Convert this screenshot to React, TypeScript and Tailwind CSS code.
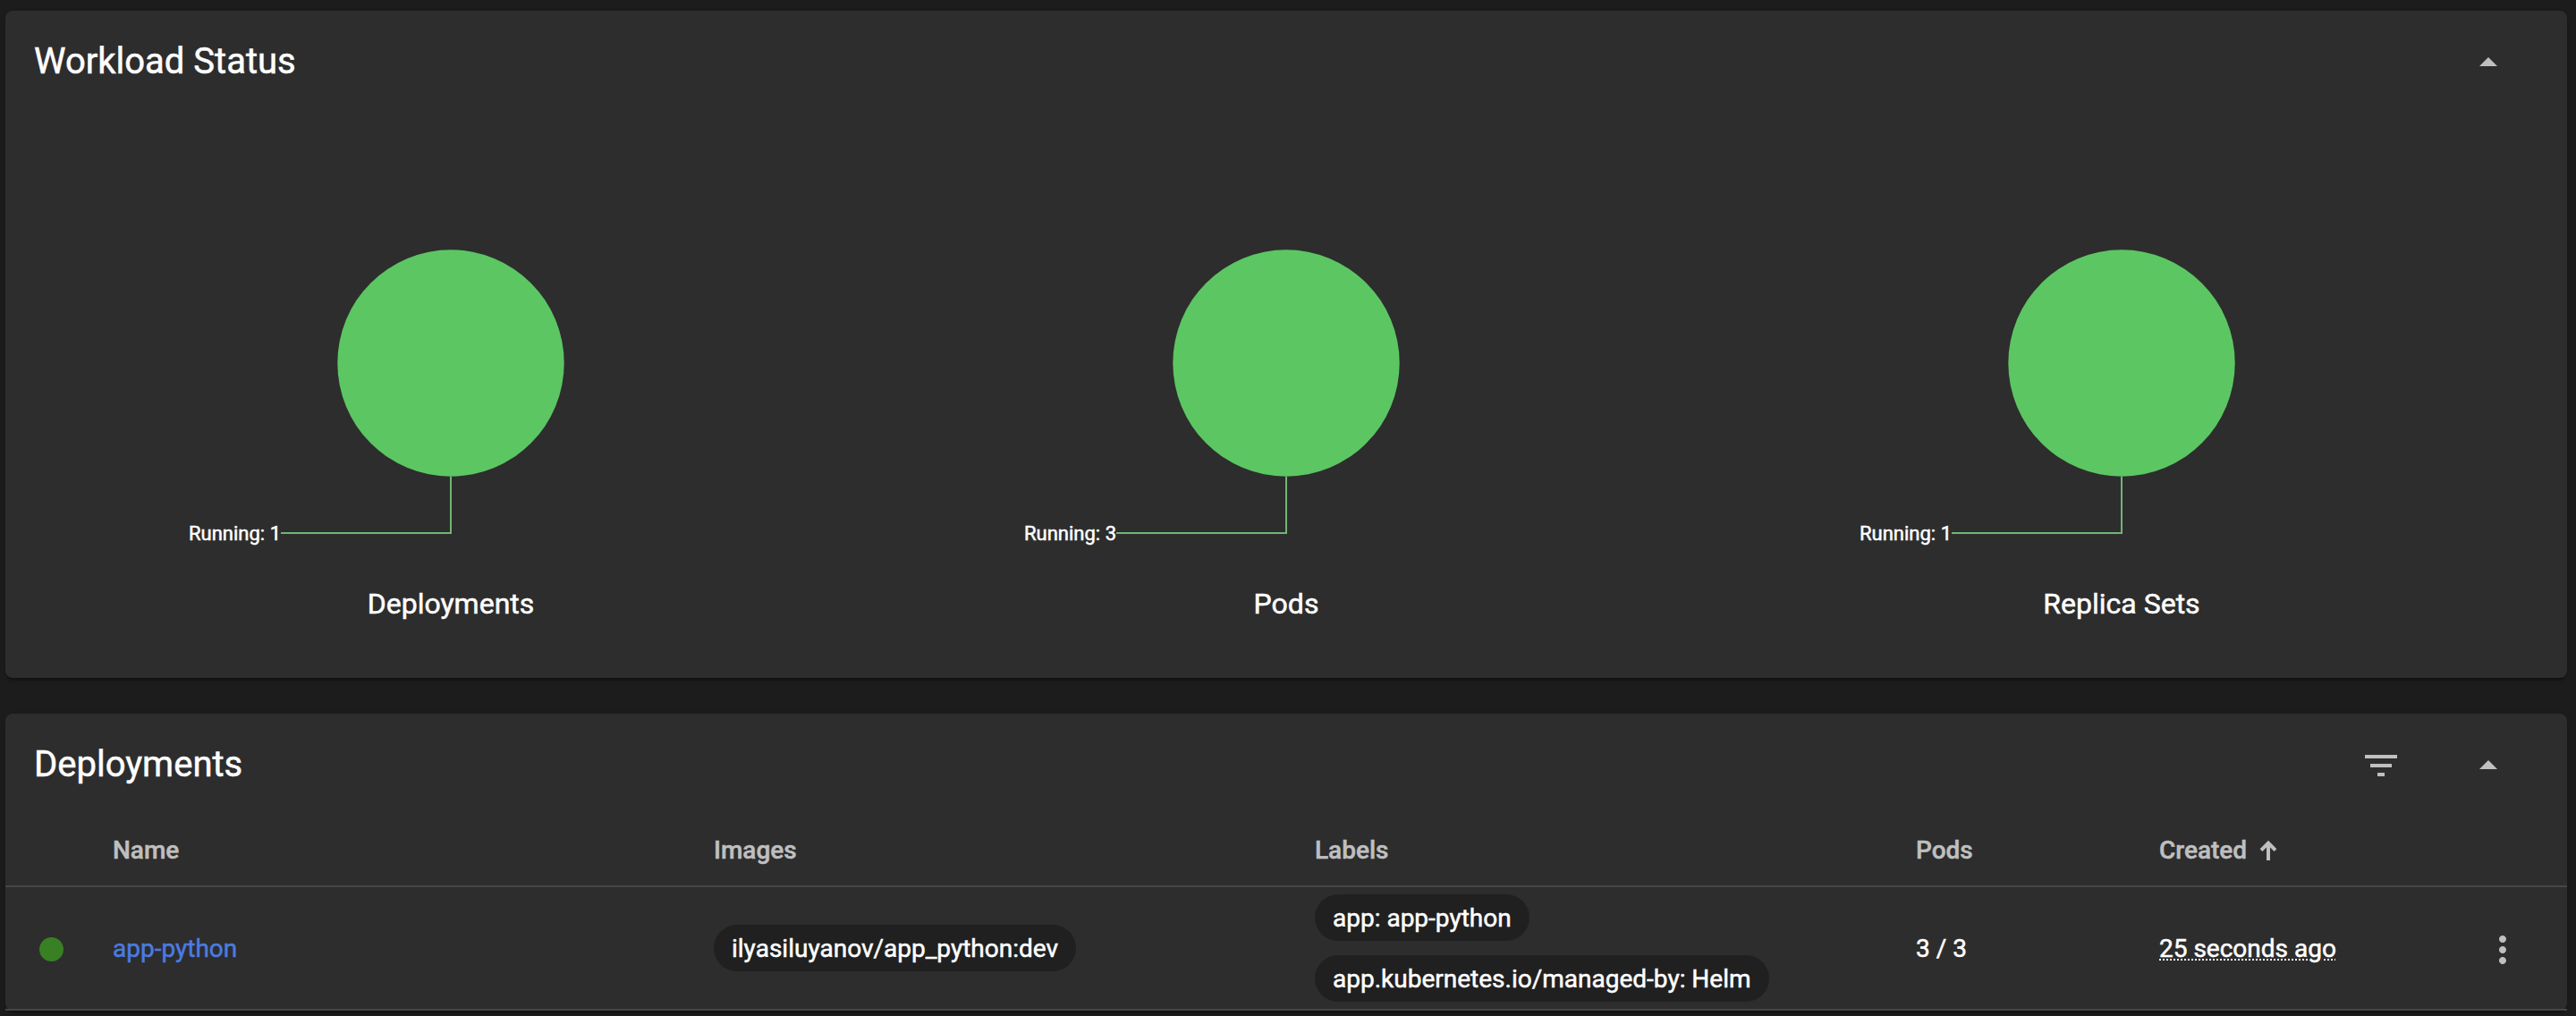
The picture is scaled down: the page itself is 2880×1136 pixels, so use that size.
import React from "react";

const cardClass =
  "rounded-lg bg-[#2d2d2d] shadow-[0_4px_2px_-2px_rgba(0,0,0,0.2),0_2px_2px_rgba(0,0,0,0.14),0_2px_6px_rgba(0,0,0,0.12)]";

const gridClass =
  "grid grid-cols-[120px_672px_672px_672px_272px_336px_120px] border-b-2 border-[#464646]";

function Icon({ d }: { d: string }) {
  return (
    <svg viewBox="0 0 24 24" className="size-12 fill-[#c0c0c0]" aria-hidden="true">
      <path d={d} />
    </svg>
  );
}

const ARROW_UP = "M7 14l5-5 5 5z";
const FILTER = "M10 18h4v-2h-4v2zM3 6v2h18V6H3zm3 7h12v-2H6v2z";
const MORE =
  "M12 8c1.1 0 2-.9 2-2s-.9-2-2-2-2 .9-2 2 .9 2 2 2zm0 2c-1.1 0-2 .9-2 2s.9 2 2 2 2-.9 2-2-.9-2-2-2zm0 6c-1.1 0-2 .9-2 2s.9 2 2 2 2-.9 2-2-.9-2-2-2z";

function StatusChart({ title, running }: { title: string; running: number }) {
  return (
    <div className="flex flex-col items-center">
      <svg viewBox="0 0 800 520" className="h-[520px] w-[800px]">
        <circle cx="400" cy="278" r="126.7" fill="#5cc663" />
        <path d="M400 404.7V468H210" fill="none" stroke="#71b575" strokeWidth="2" />
        <text
          x="210"
          y="476"
          textAnchor="end"
          fontSize="22"
          fill="#ffffff"
          stroke="#ffffff"
          strokeWidth="0.5"
        >
          Running: {running}
        </text>
      </svg>
      <div className="mt-2 text-[32px] leading-[38px]">{title}</div>
    </div>
  );
}

function Chip({ children }: { children: React.ReactNode }) {
  return (
    <span className="flex h-[52px] items-center rounded-full bg-[#202020] px-5 pt-0.5">
      {children}
    </span>
  );
}

function SortArrow() {
  return (
    <svg
      viewBox="0 0 20 24"
      className="h-6 w-5"
      fill="none"
      stroke="#bfbfbf"
      strokeWidth="4"
      aria-hidden="true"
    >
      <path d="M10 23V3M2 11.6l8-8 8 8" />
    </svg>
  );
}

export default function App() {
  return (
    <main className="flex h-[1136px] w-[2880px] flex-col gap-10 overflow-hidden bg-[#1c1c1c] pt-3 pr-[10px] pl-[6px] font-[Roboto,sans-serif] text-[28px] leading-8 text-white [-webkit-text-stroke:0.5px_currentColor]">
      <section className={`${cardClass} h-[746px] shrink-0`}>
        <header className="flex h-[116px] items-center justify-between pr-16 pl-8">
          <h2 className="pb-0.5 text-[40px] leading-[48px]">Workload Status</h2>
          <Icon d={ARROW_UP} />
        </header>
        <div className="grid grid-cols-3 px-[31px]">
          <StatusChart title="Deployments" running={1} />
          <StatusChart title="Pods" running={3} />
          <StatusChart title="Replica Sets" running={1} />
        </div>
      </section>

      <section className={`${cardClass} h-[332px] shrink-0`}>
        <header className="flex h-[116px] items-center pr-16 pl-8">
          <h2 className="flex-1 pb-0.5 text-[40px] leading-[48px]">Deployments</h2>
          <div className="flex gap-[72px]">
            <Icon d={FILTER} />
            <Icon d={ARROW_UP} />
          </div>
        </header>
        <div className={`${gridClass} h-[78px] items-center pb-0.5 font-medium text-[#bfbfbf]`}>
          <span />
          <span>Name</span>
          <span>Images</span>
          <span>Labels</span>
          <span>Pods</span>
          <span className="flex items-center gap-3.5">
            Created
            <SortArrow />
          </span>
          <span />
        </div>
        <div className={`${gridClass} h-[138px] items-center`}>
          <span className="mt-0.5 ml-[38px] size-[27px] rounded-full bg-[#388023]" />
          <a className="pt-0.5 text-[#4b7be0]">app-python</a>
          <div className="flex">
            <Chip>ilyasiluyanov/app_python:dev</Chip>
          </div>
          <div className="flex flex-col items-start gap-4">
            <Chip>app: app-python</Chip>
            <Chip>app.kubernetes.io/managed-by: Helm</Chip>
          </div>
          <span className="pt-0.5">3 / 3</span>
          <span className="pt-0.5 underline decoration-dotted decoration-2 underline-offset-2">
            25 seconds ago
          </span>
          <span className="ml-6 pt-1">
            <Icon d={MORE} />
          </span>
        </div>
      </section>
    </main>
  );
}
